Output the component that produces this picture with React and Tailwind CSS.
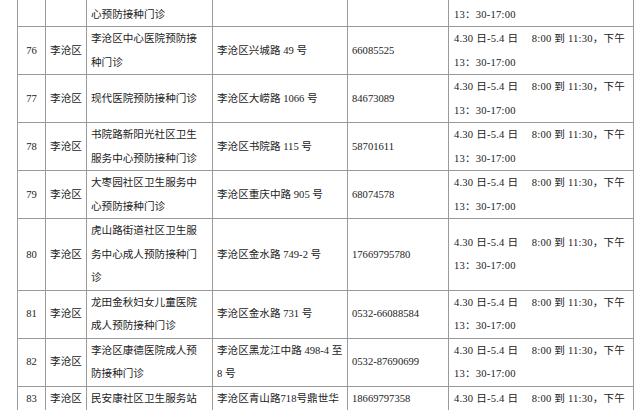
import React from 'react';

const TIME = ['4.30 日-5.4 日\u3000 8:00 到 11:30，下午', '13：30-17:00'];

// first row is the tail of #75, its upper line sits above the crop
const rows = [
  { no: '', area: '', name: ['\u00a0', '心预防接种门诊'], addr: [''], tel: '', time: ['\u00a0', '13：30-17:00'] },
  { no: '76', area: '李沧区', name: ['李沧区中心医院预防接', '种门诊'], addr: ['李沧区兴城路 49 号'], tel: '66085525' },
  { no: '77', area: '李沧区', name: ['现代医院预防接种门诊'], addr: ['李沧区大崂路 1066 号'], tel: '84673089' },
  { no: '78', area: '李沧区', name: ['书院路新阳光社区卫生', '服务中心预防接种门诊'], addr: ['李沧区书院路 115 号'], tel: '58701611' },
  { no: '79', area: '李沧区', name: ['大枣园社区卫生服务中', '心预防接种门诊'], addr: ['李沧区重庆中路 905 号'], tel: '68074578' },
  { no: '80', area: '李沧区', name: ['虎山路街道社区卫生服', '务中心成人预防接种门', '诊'], addr: ['李沧区金水路 749-2 号'], tel: '17669795780' },
  { no: '81', area: '李沧区', name: ['龙田金秋妇女儿童医院', '成人预防接种门诊'], addr: ['李沧区金水路 731 号'], tel: '0532-66088584' },
  { no: '82', area: '李沧区', name: ['李沧区康德医院成人预', '防接种门诊'], addr: ['李沧区黑龙江中路 498-4 至', '8 号'], tel: '0532-87690699' },
  { no: '83', area: '李沧区', name: ['民安康社区卫生服务站'], addr: ['李沧区青山路718号鼎世华'], tel: '18669797358', time: [TIME[0]], top: true },
];

const Lines = ({ lines }) =>
  lines.map((l, i) => (
    <React.Fragment key={i}>
      {i > 0 && <br />}
      {l}
    </React.Fragment>
  ));

export default function App() {
  return (
    <div className="w-[640px] h-[410px] overflow-hidden bg-white pl-[17px]">
      <table className="-mt-[22px] w-[616px] table-fixed border-collapse text-[10.6px] leading-[23.5px] text-[#222] font-['Liberation_Serif','Noto_Sans_CJK_SC',serif]">
        <colgroup>
          <col className="w-[28px]" />
          <col className="w-[41px]" />
          <col className="w-[126px]" />
          <col className="w-[135px]" />
          <col className="w-[101px]" />
          <col className="w-[185px]" />
        </colgroup>
        <tbody>
          {rows.map((r, i) => {
            const v = r.top ? 'align-top' : 'align-middle';
            const cell = `border border-[#9a9a9a] p-0 whitespace-nowrap ${v}`;
            return (
              <tr key={i}>
                <td className={`${cell} text-center`}>{r.no}</td>
                <td className={`${cell} text-center`}>{r.area}</td>
                <td className={`${cell} pl-[4px]`}><Lines lines={r.name} /></td>
                <td className={`${cell} pl-[4px]`}><Lines lines={r.addr} /></td>
                <td className={`${cell} pl-[4px]`}>{r.tel}</td>
                <td className={`${cell} pl-[5px] tracking-[0.2px]`}><Lines lines={r.time || TIME} /></td>
              </tr>
            );
          })}
        </tbody>
      </table>
    </div>
  );
}
